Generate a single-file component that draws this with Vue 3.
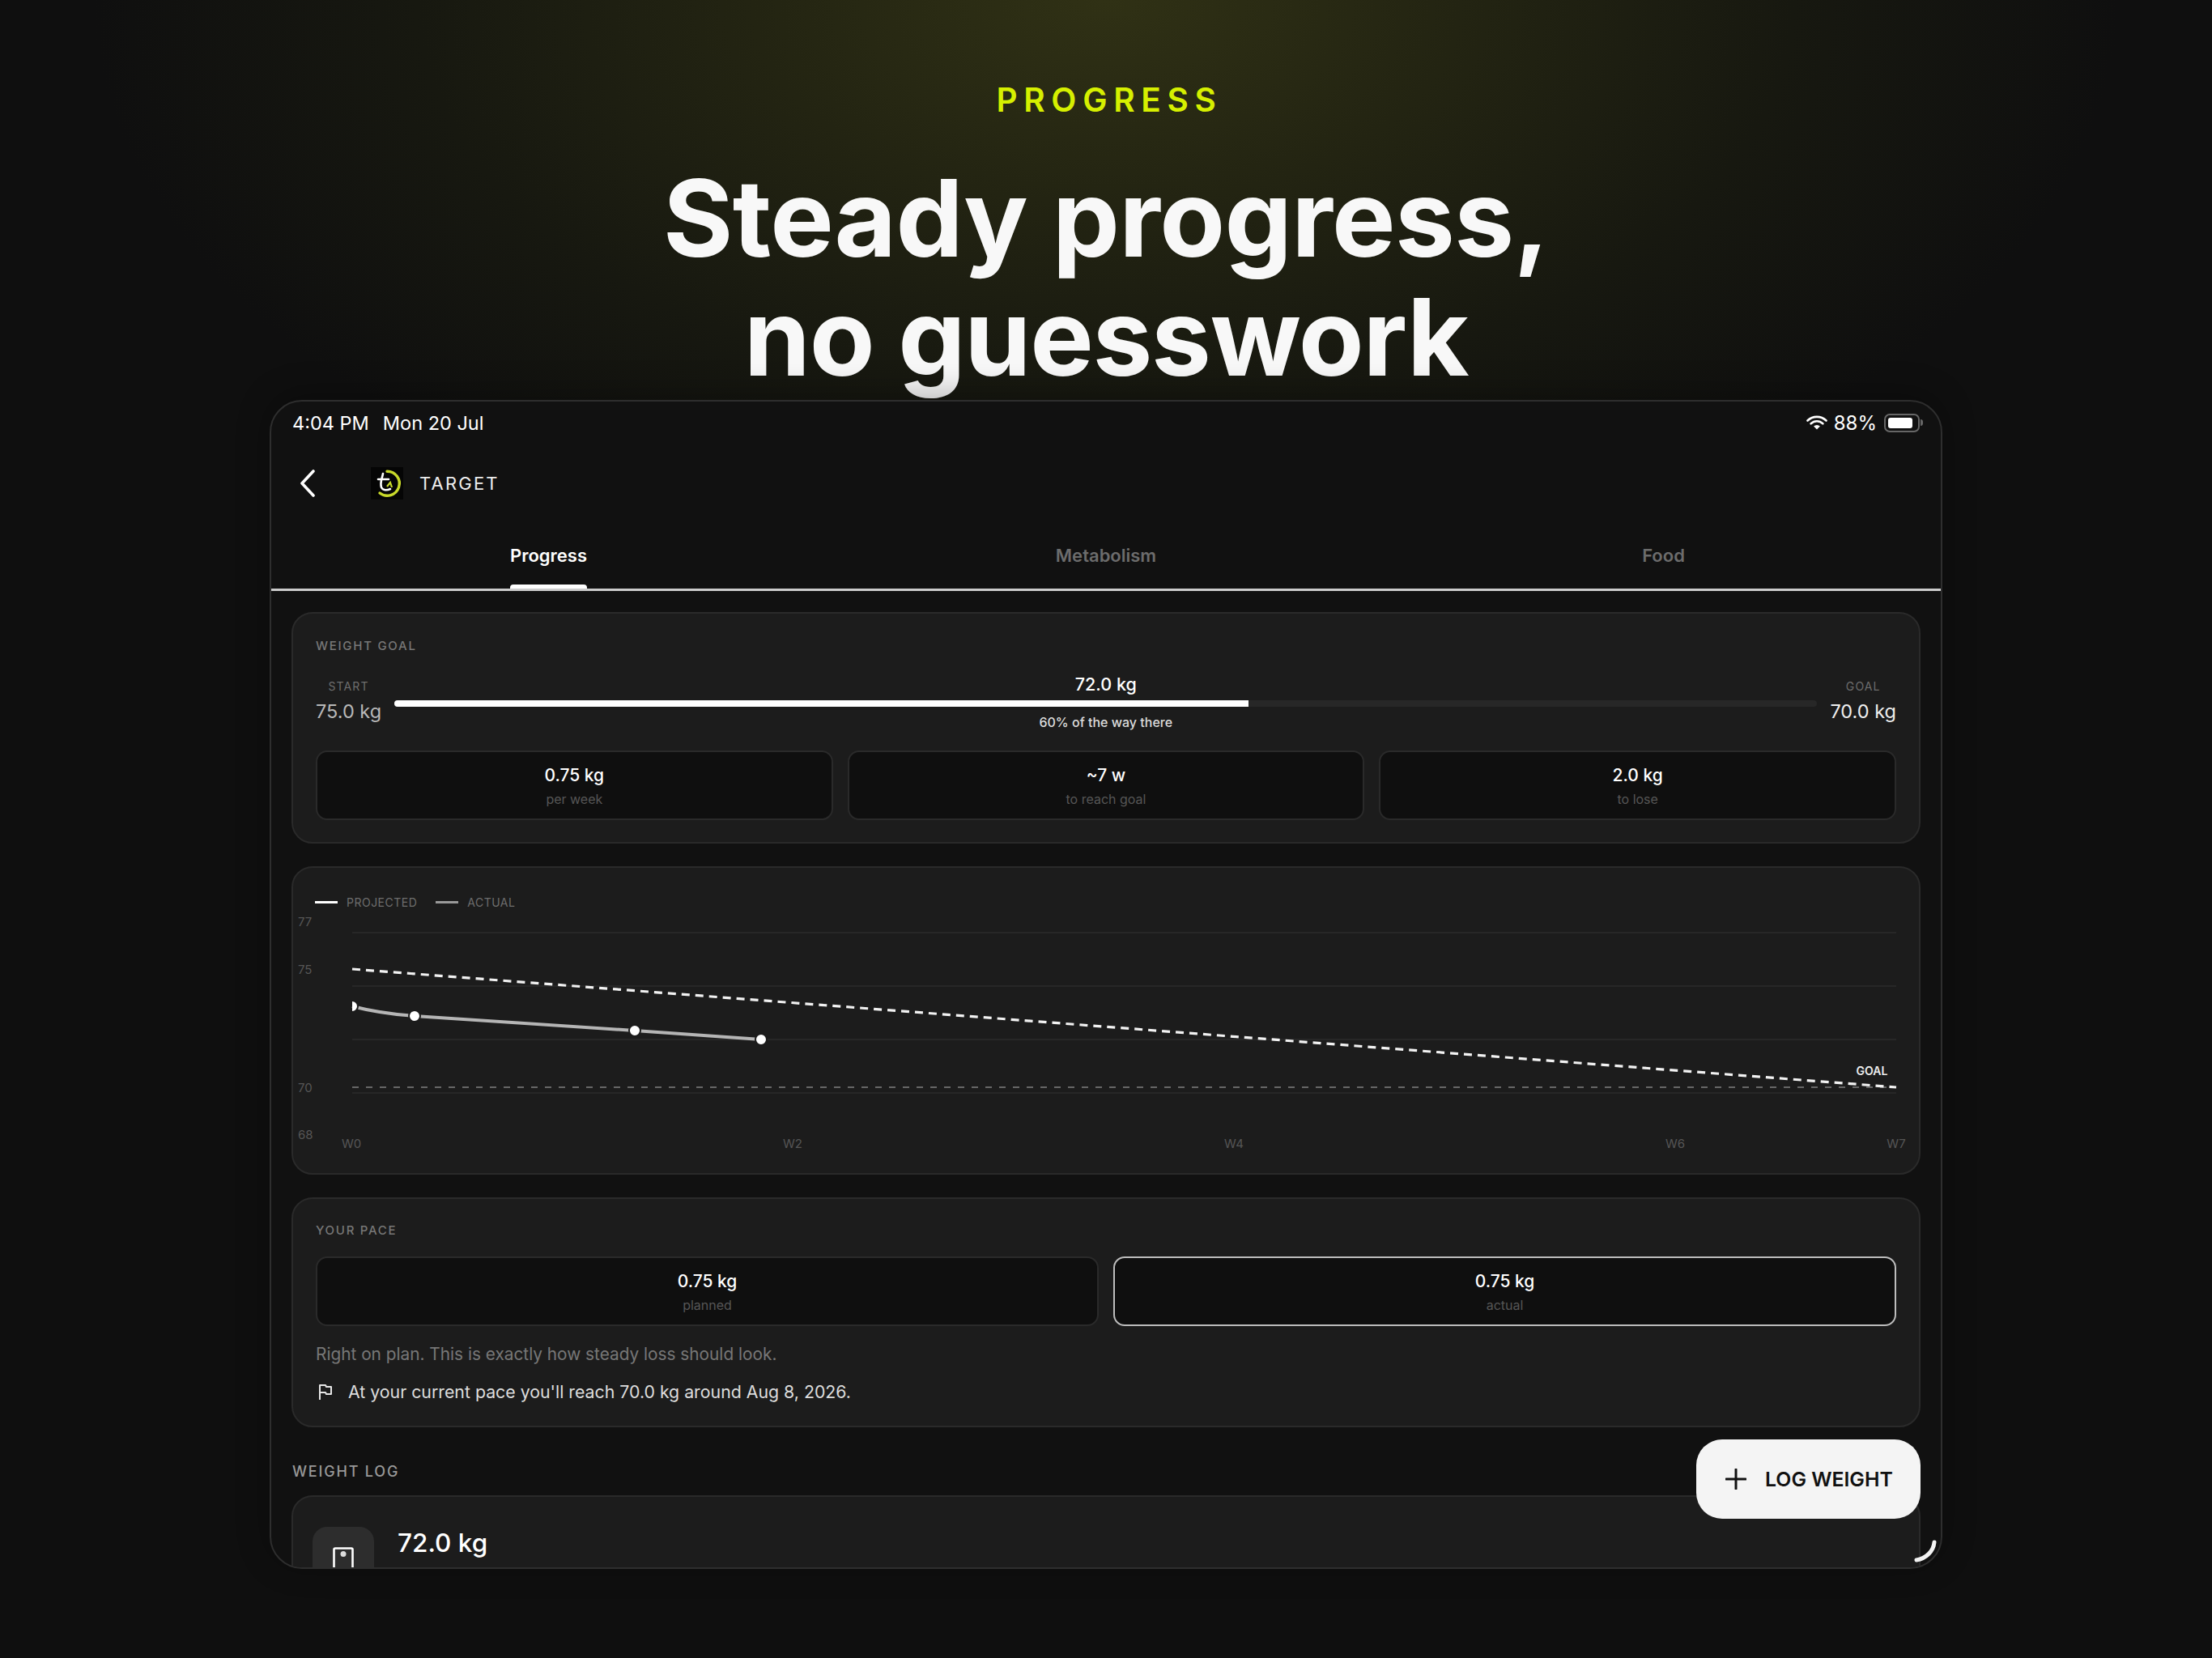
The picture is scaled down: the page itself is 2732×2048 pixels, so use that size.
<script setup>
const tabs = [
  { label: 'Progress', active: true },
  { label: 'Metabolism' },
  { label: 'Food' }
]
const goalStats = [
  { value: '0.75 kg', label: 'per week' },
  { value: '~7 w', label: 'to reach goal' },
  { value: '2.0 kg', label: 'to lose' }
]
const paceStats = [
  { value: '0.75 kg', label: 'planned' },
  { value: '0.75 kg', label: 'actual', active: true }
]

// chart coords are relative to the svg box, which starts at card x 0 / page y 1125
const ox = 362
const oy = 1125
const gridY = [1152, 1218, 1284, 1350].map((y) => y - oy)
const yLabels = [
  { t: '77', y: 1139 },
  { t: '75', y: 1198 },
  { t: '70', y: 1344 },
  { t: '68', y: 1402 }
]
const xLabels = [
  { t: 'W0', x: 434 },
  { t: 'W2', x: 979 },
  { t: 'W4', x: 1524 },
  { t: 'W6', x: 2069 },
  { t: 'W7', x: 2342 }
]
const dots = [
  { x: 435, y: 1243 },
  { x: 512, y: 1255 },
  { x: 784, y: 1273 },
  { x: 940, y: 1284 }
]
</script>

<template>
  <div class="page">
    <header class="hero">
      <p class="eyebrow">PROGRESS</p>
      <h1 class="headline"><span class="line-one">Steady progress,</span><br />no guesswork</h1>
    </header>

    <main class="device">
      <div class="status">
        <div class="status-left">
          <span>4:04 PM</span>
          <span>Mon 20 Jul</span>
        </div>
        <div class="status-right">
          <svg class="wifi" width="26" height="18" viewBox="0 0 26 18">
            <path d="M1.5 6.5a16.5 16.5 0 0 1 23 0" fill="none" stroke="#fff" stroke-width="2.6" stroke-linecap="round" />
            <path d="M5.6 10.3a10.6 10.6 0 0 1 14.8 0" fill="none" stroke="#fff" stroke-width="2.6" stroke-linecap="round" />
            <path d="M13 17.4l-3.9-3.9a5.5 5.5 0 0 1 7.8 0z" fill="#fff" />
          </svg>
          <span>88%</span>
          <div class="battery"><div class="battery-fill"></div></div>
        </div>
      </div>

      <div class="topbar">
        <svg class="back" width="22" height="34" viewBox="0 0 22 34">
          <path d="M18 2L4 17l14 15" fill="none" stroke="#fff" stroke-width="3.6" stroke-linecap="round" stroke-linejoin="round" />
        </svg>
        <div class="logo">
          <svg width="40" height="40" viewBox="0 0 40 40">
            <path d="M20 5.2A15 15 0 1 1 11 32" fill="none" stroke="#c8d92a" stroke-width="3.4" stroke-linecap="round" />
            <path d="M9 15h13M15 8c-1 6-4 11-2 17 2 4 7 4 11 2" fill="none" stroke="#fff" stroke-width="2.6" stroke-linecap="round" />
            <path d="M20 24l4-5 2 6" fill="none" stroke="#c8d92a" stroke-width="2.2" />
          </svg>
        </div>
        <span class="brand">TARGET</span>
      </div>

      <nav class="tabs">
        <div v-for="tab in tabs" :key="tab.label" class="tab" :class="{ active: tab.active }">
          <span class="tab-label">{{ tab.label }}</span>
        </div>
      </nav>

      <div class="content">
        <section class="card goal-card">
          <h3 class="card-title">WEIGHT GOAL</h3>
          <div class="goal-row">
            <div class="end">
              <span class="end-label">START</span>
              <span class="end-value">75.0 kg</span>
            </div>
            <div class="bar-wrap">
              <span class="bar-now">72.0 kg</span>
              <div class="bar"><div class="bar-fill" :style="{ width: '60%' }"></div></div>
              <span class="bar-note">60% of the way there</span>
            </div>
            <div class="end">
              <span class="end-label">GOAL</span>
              <span class="end-value bright">70.0 kg</span>
            </div>
          </div>
          <div class="stats three">
            <div v-for="s in goalStats" :key="s.label" class="stat">
              <span class="stat-value">{{ s.value }}</span>
              <span class="stat-label">{{ s.label }}</span>
            </div>
          </div>
        </section>

        <section class="card chart-card">
          <div class="legend">
            <i class="swatch white"></i><span>PROJECTED</span>
            <i class="swatch grey"></i><span>ACTUAL</span>
          </div>
          <svg class="chart" width="2006" height="310" viewBox="0 0 2006 310">
            <line v-for="y in gridY" :key="y" :x1="435 - ox" :x2="2342 - ox" :y1="y" :y2="y" stroke="#272727" stroke-width="2" />
            <text v-for="l in yLabels" :key="l.t" x="6" :y="l.y - oy + 5" class="axis">{{ l.t }}</text>
            <text v-for="l in xLabels" :key="l.t" :x="l.x - ox" :y="1418 - oy" text-anchor="middle" class="axis">{{ l.t }}</text>
            <line :x1="435 - ox" :x2="2342 - ox" :y1="1343 - oy" :y2="1343 - oy" stroke="#666" stroke-width="2" stroke-dasharray="8 9" />
            <line :x1="435 - ox" :y1="1197 - oy" :x2="2342 - ox" :y2="1343 - oy" stroke="#f2f2f2" stroke-width="3.2" stroke-dasharray="10 7" />
            <text :x="2312 - ox" :y="1328 - oy" text-anchor="middle" class="goal-text">GOAL</text>
            <path :d="`M${435 - ox} ${1243 - oy} Q${470 - ox} ${1252 - oy} ${512 - ox} ${1255 - oy} L${784 - ox} ${1273 - oy} L${940 - ox} ${1284 - oy}`" fill="none" stroke="#b5b5b5" stroke-width="4" />
            <clipPath id="plot"><rect :x="435 - ox" y="0" width="1907" height="310" /></clipPath>
            <g clip-path="url(#plot)">
              <circle v-for="d in dots" :key="d.x" :cx="d.x - ox" :cy="d.y - oy" r="7" fill="#fff" stroke="#1c1c1c" stroke-width="2" />
            </g>
          </svg>
        </section>

        <section class="card pace-card">
          <h3 class="card-title">YOUR PACE</h3>
          <div class="stats two">
            <div v-for="s in paceStats" :key="s.label" class="stat" :class="{ selected: s.active }">
              <span class="stat-value">{{ s.value }}</span>
              <span class="stat-label">{{ s.label }}</span>
            </div>
          </div>
          <p class="pace-note">Right on plan. This is exactly how steady loss should look.</p>
          <p class="pace-eta">
            <svg width="20" height="22" viewBox="0 0 20 22">
              <path d="M3 21V3h7l1 2h6v9h-6l-1-2H3" fill="none" stroke="#e6e6e6" stroke-width="2" stroke-linejoin="round" />
            </svg>
            At your current pace you'll reach 70.0 kg around Aug 8, 2026.
          </p>
        </section>

        <h4 class="log-title">WEIGHT LOG</h4>
        <section class="card log-card">
          <div class="log-icon">
            <svg width="26" height="30" viewBox="0 0 26 30">
              <rect x="1.5" y="1.5" width="23" height="27" rx="1.5" fill="none" stroke="#fff" stroke-width="2.6" />
              <circle cx="13" cy="8.5" r="3.5" fill="#ddd" />
            </svg>
          </div>
          <span class="log-value">72.0 kg</span>
        </section>
      </div>

      <button class="fab">
        <svg width="26" height="26" viewBox="0 0 26 26">
          <path d="M13 1v24M1 13h24" stroke="#111" stroke-width="3" stroke-linecap="round" />
        </svg>
        LOG WEIGHT
      </button>

      <svg class="corner" width="32" height="30" viewBox="0 0 32 30">
        <path d="M27 4C26 15 17 24 5 26" fill="none" stroke="#f2f2f2" stroke-width="5" stroke-linecap="round" />
      </svg>
    </main>
  </div>
</template>

<style>
html,
body {
  margin: 0;
  background: #0e0e0e;
}
</style>

<style scoped>
.page {
  width: 2732px;
  height: 2048px;
  overflow: hidden;
  font-family: Inter, "Liberation Sans", sans-serif;
  color: #fff;
  background: radial-gradient(ellipse 1250px 720px at 50% 0, #303115 0%, #232412 35%, #171810 68%, #0f0f0f 100%), #0e0e0e;
}

.hero {
  height: 494px;
  box-sizing: border-box;
  padding-top: 102px;
  text-align: center;
}

.eyebrow {
  margin: 0;
  padding-left: 8px;
  font-size: 40.5px;
  line-height: 44px;
  font-weight: 600;
  letter-spacing: 0.19em;
  color: #d6f000;
}

.headline {
  margin: 50px 0 0;
  font-size: 132px;
  line-height: 147px;
  font-weight: 700;
  letter-spacing: -0.01em;
  color: #f8f8f8;
}

.line-one {
  letter-spacing: -0.005em;
}

.device {
  position: relative;
  width: 2066px;
  height: 1444px;
  box-sizing: border-box;
  margin: 0 auto;
  background: #111;
  border: 2px solid #2e2e2e;
  border-radius: 40px;
  box-shadow: 0 -6px 40px rgba(0, 0, 0, 0.3);
  overflow: hidden;
}

.status {
  height: 52px;
  padding: 0 26px;
  display: flex;
  align-items: center;
  justify-content: space-between;
  font-size: 24px;
  color: #fff;
}

.status-left {
  display: flex;
  gap: 17px;
  font-size: 23.5px;
}

.status-right {
  display: flex;
  align-items: center;
  gap: 8px;
}

.battery {
  position: relative;
  width: 44px;
  height: 23px;
  box-sizing: border-box;
  margin-left: 1px;
  padding: 3px;
  border: 2px solid #666;
  border-radius: 7px;
}

.battery::after {
  content: "";
  position: absolute;
  right: -6px;
  top: 5px;
  width: 3px;
  height: 8px;
  background: #666;
  border-radius: 0 3px 3px 0;
}

.battery-fill {
  width: 88%;
  height: 100%;
  background: #fff;
  border-radius: 3px;
}

.topbar {
  height: 98px;
  padding-left: 34px;
  display: flex;
  align-items: center;
}

.logo {
  width: 40px;
  height: 40px;
  margin-left: 67px;
  background: #050505;
}

.brand {
  margin-left: 20px;
  font-size: 22px;
  letter-spacing: 0.1em;
  color: #eee;
}

.tabs {
  display: grid;
  grid-template-columns: 685px 1fr 685px;
  height: 81px;
  border-bottom: 3px solid #ccc;
}

.tab {
  display: flex;
  justify-content: center;
  font-size: 22px;
  font-weight: 600;
  color: #6c6c6c;
}

.tab-label {
  position: relative;
  padding-top: 27px;
  height: 54px;
}

.tab.active {
  color: #fff;
}

.tab.active .tab-label::after {
  content: "";
  position: absolute;
  left: 0;
  right: 0;
  bottom: 0;
  height: 5px;
  background: #fff;
  border-radius: 4px 4px 0 0;
}

.content {
  padding: 26px 25px 0;
}

.card {
  box-sizing: border-box;
  background: #1c1c1c;
  border: 2px solid #2a2a2a;
  border-radius: 26px;
}

.card-title {
  margin: 0;
  font-size: 15px;
  line-height: 20px;
  font-weight: 500;
  letter-spacing: 0.115em;
  color: #777;
}

.goal-card {
  height: 286px;
  padding: 30px 28px 0;
}

.goal-row {
  display: flex;
  align-items: flex-start;
  margin-top: 24px;
}

.end {
  display: flex;
  flex-direction: column;
  align-items: center;
  padding-top: 7px;
}

.end-label {
  font-size: 14px;
  line-height: 18px;
  letter-spacing: 0.08em;
  color: #6e6e6e;
}

.end-value {
  margin-top: 7px;
  font-size: 23.5px;
  line-height: 30px;
  color: #b8b8b8;
}

.end-value.bright {
  color: #eee;
}

.bar-wrap {
  flex: 1;
  margin: 0 16px;
  display: flex;
  flex-direction: column;
  align-items: center;
}

.bar-now {
  font-size: 21.5px;
  line-height: 26px;
  font-weight: 500;
}

.bar {
  width: 100%;
  height: 8px;
  margin-top: 7px;
  background: #272727;
  border-radius: 4px;
  overflow: hidden;
}

.bar-fill {
  height: 100%;
  background: #fff;
}

.bar-note {
  margin-top: 9px;
  font-size: 16px;
  line-height: 20px;
  font-weight: 500;
  color: #ddd;
}

.stats {
  display: grid;
  gap: 18px;
}

.stats.three {
  grid-template-columns: repeat(3, 1fr);
  margin-top: 25px;
}

.stats.two {
  grid-template-columns: repeat(2, 1fr);
  margin-top: 22px;
}

.stat {
  height: 86px;
  box-sizing: border-box;
  padding-top: 16px;
  display: flex;
  flex-direction: column;
  align-items: center;
  background: #0f0f0f;
  border: 2px solid #2a2a2a;
  border-radius: 14px;
}

.stat.selected {
  border-color: #bdbdbd;
}

.stat-value {
  font-size: 21px;
  line-height: 26px;
  font-weight: 500;
}

.stat-label {
  margin-top: 6px;
  font-size: 16px;
  line-height: 20px;
  color: #565656;
}

.chart-card {
  height: 381px;
  margin-top: 28px;
  padding-top: 32px;
}

.legend {
  height: 20px;
  padding-left: 27px;
  display: flex;
  align-items: center;
  font-size: 14px;
  letter-spacing: 0.035em;
  color: #6e6e6e;
}

.swatch {
  width: 28px;
  height: 3px;
  margin-right: 11px;
}

.swatch.white {
  background: #fff;
}

.swatch.grey {
  margin-left: 23px;
  background: #999;
}

.chart {
  display: block;
  margin-top: 1px;
}

.axis {
  font-size: 15px;
  fill: #565656;
}

.goal-text {
  font-size: 14px;
  font-weight: 600;
  fill: #eee;
}

.pace-card {
  height: 284px;
  margin-top: 28px;
  padding: 29px 28px 0;
}

.pace-note {
  margin: 20px 0 0;
  font-size: 20.8px;
  line-height: 30px;
  color: #777;
}

.pace-eta {
  margin: 16px 0 0;
  display: flex;
  align-items: center;
  gap: 18px;
  padding-left: 2px;
  font-size: 21.3px;
  line-height: 30px;
  color: #ddd;
}

.log-title {
  margin: 43px 0 0 1px;
  font-size: 18px;
  line-height: 24px;
  font-weight: 500;
  letter-spacing: 0.1em;
  color: #999;
}

.log-card {
  height: 200px;
  margin-top: 17px;
  padding: 37px 0 0 24px;
  display: flex;
  align-items: flex-start;
  gap: 29px;
}

.log-icon {
  width: 76px;
  height: 76px;
  box-sizing: border-box;
  padding-top: 25px;
  display: flex;
  justify-content: center;
  background: #2d2d2d;
  border-radius: 18px;
}

.log-value {
  font-size: 31.5px;
  line-height: 40px;
  font-weight: 500;
}

.fab {
  position: absolute;
  right: 25px;
  bottom: 60px;
  width: 277px;
  height: 98px;
  padding: 0 0 0 36px;
  display: flex;
  align-items: center;
  gap: 23px;
  border: none;
  border-radius: 32px;
  background: #f4f4f4;
  font-family: inherit;
  font-size: 24.8px;
  font-weight: 600;
  color: #111;
}

.corner {
  position: absolute;
  right: 3px;
  bottom: 5px;
}
</style>
